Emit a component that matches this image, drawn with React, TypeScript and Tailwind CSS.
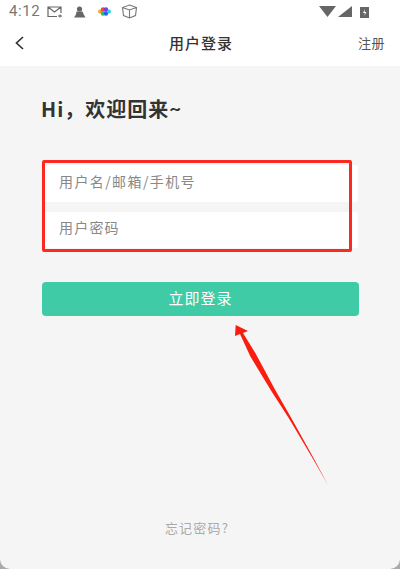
export default function App() {
  const font = { fontFamily: '"Noto Sans CJK SC", sans-serif' };
  return (
    <div className="relative w-[400px] h-[569px] overflow-hidden bg-[#a9a9a9]" style={font}>
      <div className="relative flex h-full flex-col overflow-hidden rounded-b-[10px] bg-[#f5f5f5]">
        <div className="bg-white">
          <div className="flex h-[22px] items-center pl-[9px] pr-[31px] pt-[1px]">
            <span className="text-[15px] leading-none tracking-[0.6px] text-[#777]" style={{ fontFamily: '"Roboto", sans-serif' }}>4:12</span>
            <svg className="ml-[7px]" width="16" height="12" viewBox="0 0 16 12" fill="none" stroke="#666" strokeWidth="1.2">
              <path d="M10 10.5H1V1h13v6M1 1l6.5 5L14 1" />
              <path d="M11 10h4M13 8.5v3" />
            </svg>
            <svg className="ml-[10px]" width="13" height="12" viewBox="0 0 13 12" fill="#666">
              <circle cx="6.5" cy="3" r="2.6" />
              <path d="M3.5 5.5h6l1 2.5 2 3.5H1l2-3z" />
            </svg>
            <svg className="ml-[12px]" width="13" height="9" viewBox="0 0 13 9">
              <circle cx="2" cy="4.5" r="2" fill="#f5a623" />
              <circle cx="5" cy="2.5" r="2.2" fill="#ef4444" />
              <circle cx="5" cy="6.5" r="2.2" fill="#22c55e" />
              <circle cx="8" cy="2.5" r="2.2" fill="#7c3aed" />
              <circle cx="8" cy="6.5" r="2.2" fill="#2563eb" />
              <circle cx="11" cy="4.5" r="2" fill="#22d3ee" />
            </svg>
            <svg className="ml-[10px]" width="17" height="15" viewBox="0 0 17 15" fill="none" stroke="#777" strokeWidth="1.1">
              <path d="M8.5 1l7 2.5-1 8-6 2.5-6-2.5-1-8zM1.5 3.5l7 2.5 7-2.5M8.5 6v8" />
            </svg>
            <div className="ml-auto flex items-center">
              <svg width="17" height="11" viewBox="0 0 17 11" fill="#666"><path d="M0 0h17l-8.5 11z" /></svg>
              <svg className="ml-[2px]" width="14" height="11" viewBox="0 0 14 11" fill="#666"><path d="M14 0v11H0z" /></svg>
              <svg className="ml-[8px]" width="9" height="12" viewBox="0 0 9 12">
                <path d="M0 1h9v11H0z" fill="#666" />
                <path d="M5 3 3 7h2l-1 3 2.5-4H4.6z" fill="#fff" />
              </svg>
            </div>
          </div>
          <div className="relative flex h-[44px] items-center justify-between pb-[3px] pl-[14px] pr-[15px]">
            <svg width="11" height="14" viewBox="0 0 11 14" fill="none" stroke="#333" strokeWidth="1.7"><path d="M9 1 2.5 7 9 13" /></svg>
            <span className="absolute left-[169px] text-[15px] font-medium leading-none tracking-[1px] text-[#333]">用户登录</span>
            <span className="text-[13px] leading-none tracking-[0.5px] text-[#555]">注册</span>
          </div>
        </div>

        <div className="flex flex-1 flex-col pl-[42px] pr-[41px]">
          <h1 className="-ml-px mt-[31px] whitespace-nowrap text-[20px] font-bold leading-[24px] tracking-[1px] text-[#333]">Hi，欢迎回来~</h1>
          <div className="mr-px mt-[44px] flex flex-col gap-[10px]">
            <div className="flex h-[37px] items-center rounded-[3px] bg-white pb-[5px] pl-[17px] text-[14px] tracking-[1.4px] text-[#888]">用户名/邮箱/手机号</div>
            <div className="flex h-[36px] items-center rounded-[3px] bg-white pb-[5px] pl-[17px] text-[14px] tracking-[1.2px] text-[#888]">用户密码</div>
          </div>
          <button className="mt-[34px] h-[34px] rounded-[4px] bg-[#3ecba5] pb-[2px] text-[15px] tracking-[1px] text-white">立即登录</button>
          <div className="mt-auto mb-[32px] pr-[7px] text-center text-[13px] leading-[18px] tracking-[1.2px] text-[#aaa]">忘记密码?</div>
        </div>

        <div className="absolute left-[42px] top-[160px] h-[92px] w-[310px] rounded-[2px] border-[3px] border-[#fb2a20]" />
        <svg className="absolute left-0 top-0" width="400" height="569" viewBox="0 0 400 569">
          <path d="M235.7 325 L248 331 L243 333 L255.6 353.5 L274.7 389 L291 417.4 L313.4 457.7 L328 485 L312.6 458.3 L289 418.6 L271.3 391 L250.4 356.5 L240 334 L235 336 Z" fill="#fb1c10" />
        </svg>
      </div>
    </div>
  );
}
